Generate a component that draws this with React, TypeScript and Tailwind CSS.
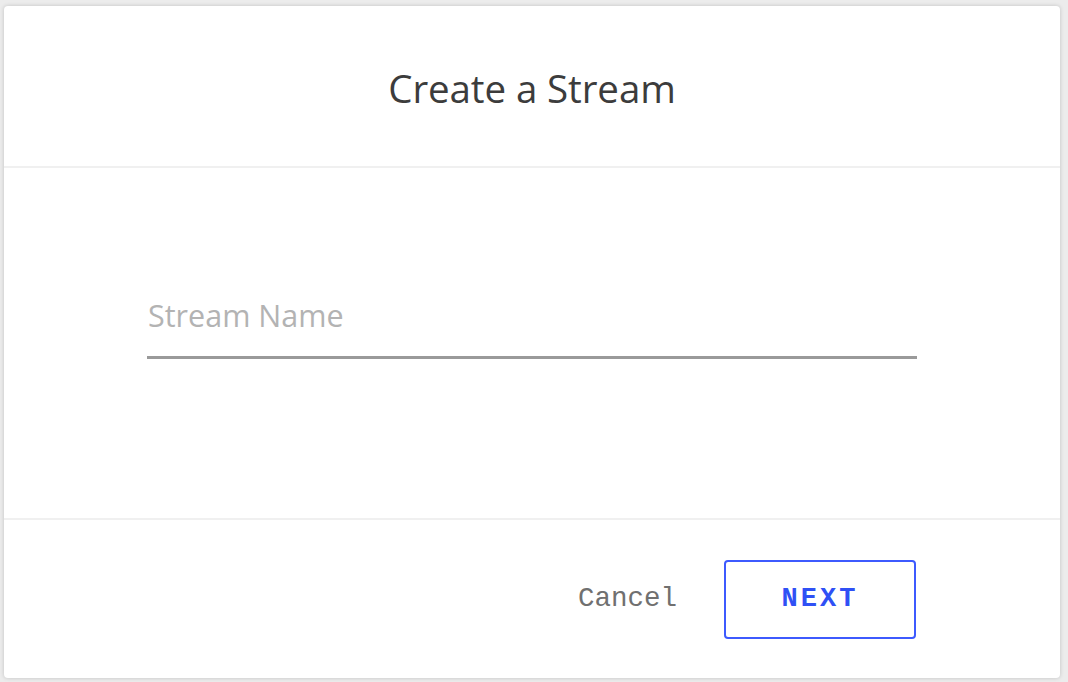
export default function App() {
  return (
    <div className="w-[1068px] h-[682px] bg-[#ececec] pt-[6px] pl-[4px] overflow-hidden">
      <div className="w-[1056px] h-[672px] bg-white rounded-[4px] shadow-[0_0_4px_rgba(0,0,0,0.18)] flex flex-col">
        <div className="h-[162px] flex items-center justify-center border-b-2 border-[#f0f0f0] pt-[6px]">
          <h1 className="text-[38.5px] text-[#3c3c3c] font-['Open_Sans',sans-serif] tracking-[-0.1px]">Create a Stream</h1>
        </div>
        <div className="h-[350px] px-[143px] pt-[124px]">
          <input
            type="text"
            placeholder="Stream Name"
            className="w-full h-[67px] pl-[1px] pb-[18px] border-b-[3px] border-[#9a9a9a] outline-none text-[30.5px] text-[#333] placeholder:text-[#b3b3b3] font-['Open_Sans',sans-serif]"
          />
        </div>
        <div className="flex-1 border-t-2 border-[#f0f0f0] flex items-center justify-end pr-[144px] gap-[47px]">
          <button className="text-[27.5px] text-[#707070] font-['Liberation_Mono',monospace]">Cancel</button>
          <button className="w-[192px] h-[79px] border-2 border-[#3d5afe] rounded-[4px] text-[27px] font-bold text-[#2f50f5] tracking-[3px] font-['Liberation_Mono',monospace]">
            NEXT
          </button>
        </div>
      </div>
    </div>
  );
}
